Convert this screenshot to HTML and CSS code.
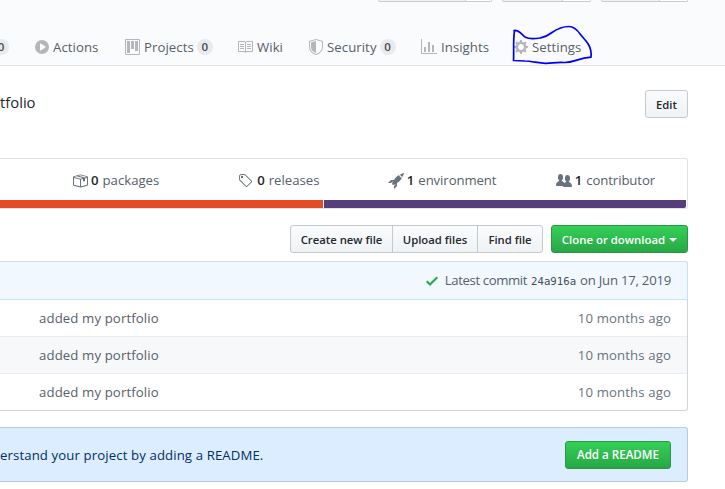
FILE: index.html
```html
<!DOCTYPE html>
<html lang="en">
<head>
<meta charset="utf-8">
<title>Repository</title>
<link rel="stylesheet" href="styles.css">
</head>
<body>
<header class="pagehead">
  <div class="social">
    <div class="social-btn watch"></div>
    <div class="social-btn star"></div>
    <div class="social-btn fork"></div>
  </div>
  <nav class="reponav">
    <a class="nav-item n-pulls"><span class="counter">0</span></a>
    <a class="nav-item n-actions"><svg width="14" height="16" viewBox="0 0 14 16"><path fill-rule="evenodd" d="M14 8A7 7 0 1 1 0 8a7 7 0 0 1 14 0zm-8.223 3.482l4.599-3.066a.5.5 0 0 0 0-.832L5.777 4.518A.5.5 0 0 0 5 4.934v6.132a.5.5 0 0 0 .777.416z"/></svg><span>Actions</span></a>
    <a class="nav-item n-projects"><svg width="15" height="16" viewBox="0 0 15 16"><path fill-rule="evenodd" d="M10 12h3V2h-3v10zm-4-2h3V2H6v8zm-4 4h3V2H2v12zm-1 1h13V1H1v14zM14 0H1a1 1 0 0 0-1 1v14a1 1 0 0 0 1 1h13a1 1 0 0 0 1-1V1a1 1 0 0 0-1-1z"/></svg><span>Projects</span><span class="counter">0</span></a>
    <a class="nav-item n-wiki"><svg width="16" height="16" viewBox="0 0 16 16"><path fill-rule="evenodd" d="M3 5h4v1H3V5zm0 3h4V7H3v1zm0 2h4V9H3v1zm11-5h-4v1h4V5zm0 2h-4v1h4V7zm0 2h-4v1h4V9zm2-6v9c0 .55-.45 1-1 1H9.5l-1 1-1-1H2c-.55 0-1-.45-1-1V3c0-.55.45-1 1-1h5.5l1 1 1-1H15c.55 0 1 .45 1 1zm-8 .5L7.5 3H2v9h6V3.5zm7-.5H9.5l-.5.5V12h6V3z"/></svg><span>Wiki</span></a>
    <a class="nav-item n-security"><svg width="14" height="16" viewBox="0 0 14 16"><path fill-rule="evenodd" d="M0 2l7-2 7 2v6.02C14 12.69 8.69 16 7 16c-1.69 0-7-3.31-7-7.98V2zm1 .75L7 1l6 1.75v5.268C13 12.104 8.449 15 7 15c-1.449 0-6-2.896-6-6.982V2.75zm1 .75L7 2v12c-1.207 0-5-2.482-5-5.985V3.5z"/></svg><span>Security</span><span class="counter">0</span></a>
    <a class="nav-item n-insights"><svg width="16" height="16" viewBox="0 0 16 16"><path fill-rule="evenodd" d="M16 14v1H0V0h1v14h15zM5 13H3V8h2v5zm4 0H7V3h2v10zm4 0h-2V6h2v7z"/></svg><span>Insights</span></a>
    <a class="nav-item n-settings"><svg width="14" height="16" viewBox="0 0 14 16"><path fill-rule="evenodd" d="M14 8.77v-1.6l-1.94-.64-.45-1.09.88-1.84-1.13-1.13-1.81.91-1.09-.45-.69-1.92h-1.6l-.63 1.94-1.11.45-1.84-.88-1.13 1.13.91 1.81-.45 1.09L0 7.23v1.59l1.94.64.45 1.09-.88 1.84 1.13 1.13 1.81-.91 1.09.45.69 1.92h1.59l.63-1.94 1.11-.45 1.84.88 1.13-1.13-.92-1.81.47-1.09L14 8.75v.02zM7 11c-1.66 0-3-1.34-3-3s1.34-3 3-3 3 1.34 3 3-1.34 3-3 3z"/></svg><span>Settings</span>
      <svg class="scribble" width="84" height="42" viewBox="510 25 84 42"><path d="M514.5 31C513 40 514 51 513.5 60.500L525 61C532 61 539 63.500 546 63.300C553 63 558 62 564 62.500C573 63 578 58 591 57.200C591.500 53 591 49 588.500 44.500C585 39 583 38 580.500 34.500C577 29.500 574 26.500 569 26.500C563 26.500 557 29 552 32.500C546 37 544 37 540 38C534 39 529 39.500 525 37C521 34 519 29.500 514 30.500"/></svg>
    </a>
  </nav>
</header>
<main class="content">
  <div class="about"><span>tfolio</span><a class="btn">Edit</a></div>
  <section class="summary">
    <ul>
      <li><svg width="16" height="16" viewBox="0 0 16 16"><path fill-rule="evenodd" d="M1 4.270v7.470c0 .45.3.84.75.97l6.500 1.730c.16.05.34.05.5 0l6.500-1.730c.45-.13.75-.52.75-.97V4.270c0-.45-.3-.84-.75-.97l-6.500-1.740a1.400 1.400 0 0 0-.5 0L1.750 3.300c-.45.13-.75.52-.75.97zm7 9.090l-6-1.590V5l6 1.610v6.750zM2 4l2.500-.67L11 5.060l-2.500.67L2 4zm13 7.770l-6 1.590V6.610l2-.55V8.500l2-.53V5.530L15 5v6.770zm-2-7.240L6.500 2.800l2-.53L15 4l-2 .53z"/></svg><b>0</b><span>packages</span></li>
      <li><svg width="14" height="16" viewBox="0 0 14 16"><path fill-rule="evenodd" d="M7.730 1.730C7.260 1.260 6.620 1 5.960 1H3.500C2.130 1 1 2.130 1 3.500v2.470c0 .66.27 1.300.73 1.770l6.060 6.060c.39.39 1.020.39 1.410 0l4.590-4.590a.996.996 0 0 0 0-1.410L7.730 1.730zM2.380 7.090c-.31-.3-.47-.7-.47-1.130V3.500c0-.88.72-1.590 1.590-1.590h2.470c.42 0 .83.16 1.130.47l6.140 6.130-4.730 4.730-6.130-6.150zM3.010 3h2v2H3V3h.01z"/></svg><b class="wide">0</b><span>releases</span></li>
      <li><svg width="16" height="16" viewBox="0 0 16 16"><path fill-rule="evenodd" d="M12.170 3.830c-.27-.27-.47-.55-.63-.88-.16-.31-.27-.66-.34-1.020-.58.33-1.160.7-1.730 1.130-.58.44-1.140.94-1.690 1.480-.7.7-1.330 1.810-1.780 2.450H3L0 10h3l2-2c-.34.77-1.020 2.980-1 3l1 1c.02.02 2.230-.64 3-1l-2 2v3l3-3v-3c.64-.45 1.750-1.090 2.450-1.780.55-.55 1.050-1.130 1.470-1.700.44-.58.81-1.160 1.140-1.720-.36-.08-.7-.19-1.030-.34a3.390 3.390 0 0 1-.86-.63zM16 0s-.09.38-.3 1.060c-.2.7-.55 1.580-1.060 2.660-.7-.08-1.270-.33-1.660-.72-.39-.39-.63-.94-.7-1.640C13.360.84 14.230.48 14.920.28 15.620.08 16 0 16 0z"/></svg><b>1</b><span class="env">environment</span></li>
      <li><svg width="16" height="16" viewBox="0 0 16 16"><path fill-rule="evenodd" d="M16 12.999c0 .439-.45 1-1 1H7.995c-.539 0-.994-.447-.995-.999H1c-.54 0-1-.561-1-1 0-2.634 3-4 3-4s.229-.409 0-1c-.841-.621-1.058-.59-1-3 .058-2.419 1.367-3 2.500-3s2.442.58 2.500 3c.058 2.410-.159 2.379-1 3-.229.59 0 1 0 1s1.549.711 2.420 2.088C9.196 9.369 10 8.999 10 8.999s.229-.409 0-1c-.841-.62-1.058-.59-1-3 .058-2.419 1.367-3 2.500-3s2.437.581 2.495 3c.059 2.410-.158 2.380-1 3-.229.59 0 1 0 1s3.005 1.366 3.005 4z"/></svg><b>1</b><span class="env">contributor</span></li>
    </ul>
    <div class="languages"><span class="html"></span><span class="css"></span></div>
  </section>
  <div class="file-nav">
    <div class="btn-group"><a class="btn b-create">Create new file</a><a class="btn b-upload">Upload files</a><a class="btn b-find">Find file</a></div>
    <a class="btn primary b-clone">Clone or download<i class="caret"></i></a>
  </div>
  <section class="files">
    <div class="commit"><svg width="12" height="16" viewBox="0 0 12 16"><path fill-rule="evenodd" d="M12 5l-8 8-4-4 1.500-1.500L4 10l6.500-6.500L12 5z"/></svg><span class="latest">Latest commit</span><code>24a916a</code><span class="date">on Jun 17, 2019</span></div>
    <div class="row"><span>added my portfolio</span><time>10 months ago</time></div>
    <div class="row alt"><span>added my portfolio</span><time>10 months ago</time></div>
    <div class="row"><span>added my portfolio</span><time>10 months ago</time></div>
  </section>
  <section class="readme"><span>erstand your project by adding a README.</span><a class="btn primary b-readme">Add a README</a></section>
</main>
</body>
</html>
```
FILE: styles.css
```css
* { box-sizing: border-box; }
body {
  margin: 0;
  height: 489px;
  overflow: hidden;
  background: #fff;
  color: #24292e;
  font: 13.2px/21px "Open Sans", "Noto Sans", sans-serif;
}
svg { display: block; flex: none; fill: currentColor; }

.pagehead {
  height: 66px;
  background: #fafbfc;
  border-bottom: 1px solid #e1e4e8;
}
.social { display: flex; gap: 10px; height: 29px; padding-left: 378px; }
.social-btn {
  display: flex;
  height: 2px;
  border: 1px solid #c9cbce;
  border-top: 0;
  border-radius: 0 0 3px 3px;
  background: linear-gradient(90deg, #eff3f6 var(--split), #c9cbce var(--split), #c9cbce calc(var(--split) + 1px), #fff 0);
}
.watch { --split: 86px; width: 114px; }
.star { --split: 59px; width: 89px; }
.fork { --split: 57px; width: 87px; }
.reponav { display: flex; height: 36px; }
.nav-item {
  display: flex;
  flex: none;
  position: relative;
  align-items: center;
  color: #586069;
  white-space: nowrap;
  letter-spacing: .06px;
}
.nav-item > svg:first-child { color: #b4b7ba; margin-right: 4px; }
.n-pulls { width: 42px; margin-left: -7px; }
.n-actions { width: 90px; }
.n-projects { width: 112px; }
.n-wiki { width: 72px; }
.n-security { width: 112px; }
.n-insights { width: 93px; }
.counter {
  width: 16px;
  height: 16px;
  margin-left: 3px;
  border-radius: 8px;
  background: #e8eaeb;
  color: #444d56;
  font-size: 11.5px;
  font-weight: 600;
  line-height: 16px;
  letter-spacing: 0;
  text-align: center;
}
.n-pulls .counter { margin-left: 0; }
.scribble {
  position: absolute;
  left: -4px;
  top: -4px;
  fill: none;
  stroke: #0000f5;
  stroke-width: 1.7;
  stroke-linejoin: round;
  stroke-linecap: round;
}

.content { width: 688px; }
.about {
  display: flex;
  align-items: center;
  justify-content: space-between;
  height: 28px;
  margin-top: 24px;
  font-size: 14.8px;
}
.about span { margin-top: -4px; }
.btn {
  display: flex;
  align-items: center;
  justify-content: center;
  height: 28px;
  width: 43px;
  border: 1px solid #c6c9cc;
  border-radius: 3px;
  background: linear-gradient(#fafbfc, #eff3f6);
  color: #24292e;
  font-size: 11.3px;
  font-weight: 600;
  white-space: nowrap;
}
.summary {
  height: 51px;
  margin-top: 40px;
  border: 1px solid #dfe2e5;
  border-left: 0;
  border-radius: 0 3px 3px 0;
}
.summary ul {
  display: flex;
  height: 41px;
  margin: 0;
  padding: 2px 0 0 34px;
  list-style: none;
}
.summary li {
  display: flex;
  flex: 1;
  align-items: center;
  justify-content: center;
  color: #586069;
}
.summary li svg { color: #6a737d; }
.summary b { margin: 0 4px 0 3px; color: #24292e; font-weight: 600; }
.summary .wide { margin-left: 5px; }
.env { letter-spacing: -.1px; }
.languages { display: flex; gap: 1px; height: 8px; padding-right: 1px; }
.html { width: 323px; background: #e34c26; }
.css { flex: 1; background: #563d7c; border-radius: 0 0 2px 0; }

.file-nav { display: flex; justify-content: flex-end; gap: 8px; margin-top: 16px; }
.btn-group { display: flex; }
.btn-group .btn { border-radius: 0; }
.btn-group .btn + .btn { margin-left: -1px; }
.btn-group .btn:first-child { border-radius: 3px 0 0 3px; }
.btn-group .btn:last-child { border-radius: 0 3px 3px 0; }
.b-create { width: 103px; }
.b-upload { width: 86px; }
.b-find { width: 66px; }
.primary {
  border-color: #289941;
  background: linear-gradient(#34d058, #28a745);
  color: #fff;
  font-size: 11.4px;
}
.b-clone { width: 137px; }
.caret {
  margin: 2px 0 0 4px;
  border: 4px solid transparent;
  border-top-color: #fff;
  border-bottom: 0;
}

.files {
  margin-top: 8px;
  height: 150px;
  border: 1px solid #d1d5da;
  border-left: 0;
  border-top: 0;
  border-radius: 0 3px 3px 0;
}
.commit {
  display: flex;
  align-items: center;
  justify-content: flex-end;
  height: 39px;
  margin-right: -1px;
  padding-right: 16px;
  border: 1px solid #c8e1ff;
  border-left: 0;
  border-radius: 0 3px 0 0;
  background: #f1f8ff;
  color: #586069;
}
.commit svg { margin: 1px 7px 0 0; color: #28a745; }
.commit code { margin: 2px 4px 0; color: #444d56; font: 10.7px "DejaVu Sans Mono", monospace; }
.latest { letter-spacing: -.4px; }
.date { letter-spacing: -.25px; }
.row {
  display: flex;
  align-items: center;
  justify-content: space-between;
  height: 37px;
  padding: 0 16px 0 39px;
  border-bottom: 1px solid #eaecef;
  color: #586069;
  letter-spacing: .12px;
}
.row:last-child { height: 36px; border-bottom: 0; }
.alt { background: #f6f8fa; }
.row time { color: #6a737d; }

.readme {
  display: flex;
  align-items: center;
  justify-content: space-between;
  height: 55px;
  margin-top: 16px;
  padding-right: 16px;
  border: 1px solid #b8cbdc;
  border-left: 0;
  border-radius: 0 3px 3px 0;
  background: #dbedff;
  color: #032f62;
}
.readme > span { padding-top: 2px; letter-spacing: .11px; }
.b-readme { width: 106px; font-size: 11.6px; }
```
